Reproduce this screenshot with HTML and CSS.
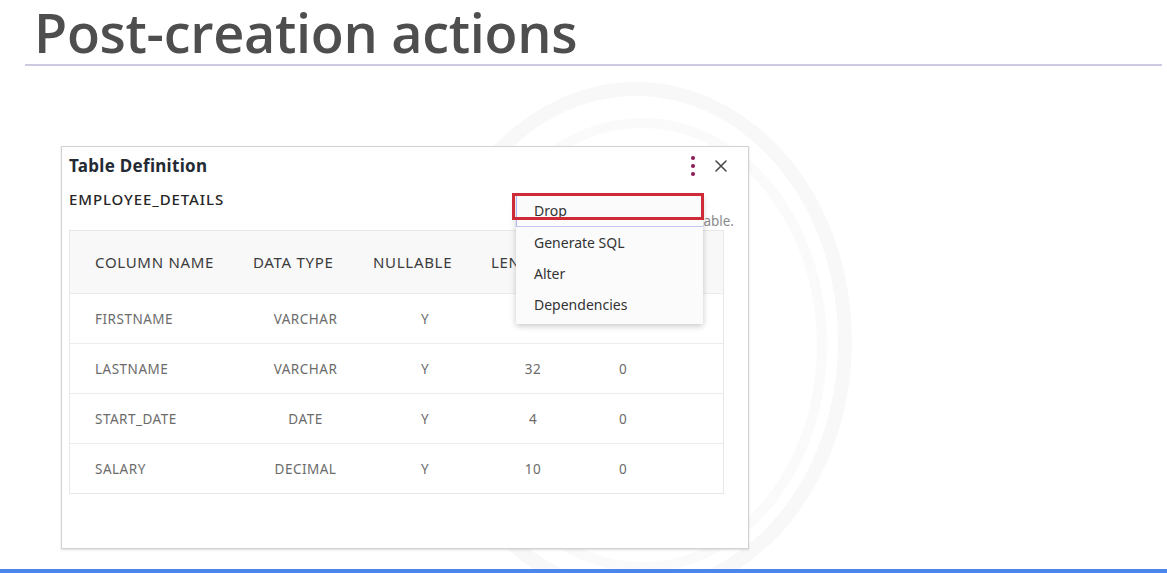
FILE: index.html
```html
<!DOCTYPE html>
<html>
<head>
<meta charset="utf-8">
<link rel="stylesheet" href="styles.css">
</head>
<body>
<svg class="watermark" width="1167" height="573" viewBox="0 0 1167 573">
  <ellipse cx="636" cy="341" rx="209" ry="252" fill="none" stroke="#f8f8f9" stroke-width="14"/>
  <ellipse cx="642" cy="345" rx="180" ry="222" fill="none" stroke="#fafafb" stroke-width="10"/>
</svg>
<header class="top">
  <h1 class="title">Post-creation actions</h1>
  <div class="rule"></div>
</header>
<main class="stage">
  <section class="panel">
    <div class="panel-head">
      <div class="panel-title">Table Definition</div>
      <div class="panel-tools">
        <span class="kebab"><i></i><i></i><i></i></span>
        <svg class="close" width="14" height="14" viewBox="0 0 14 14"><path d="M2 2 L12 12 M12 2 L2 12" stroke="#4a4a4a" stroke-width="1.6" stroke-linecap="round"/></svg>
      </div>
    </div>
    <div class="subtitle">EMPLOYEE_DETAILS</div>
    <div class="note">Choose an action for this table.</div>
    <div class="table">
      <div class="row head">
        <div class="c c1">COLUMN NAME</div>
        <div class="c c2">DATA TYPE</div>
        <div class="c c3">NULLABLE</div>
        <div class="c c4">LENGTH</div>
        <div class="c c5">SCALE</div>
      </div>
      <div class="row">
        <div class="c c1">FIRSTNAME</div><div class="c c2">VARCHAR</div><div class="c c3">Y</div><div class="c c4">32</div><div class="c c5">0</div>
      </div>
      <div class="row">
        <div class="c c1">LASTNAME</div><div class="c c2">VARCHAR</div><div class="c c3">Y</div><div class="c c4">32</div><div class="c c5">0</div>
      </div>
      <div class="row">
        <div class="c c1">START_DATE</div><div class="c c2">DATE</div><div class="c c3">Y</div><div class="c c4">4</div><div class="c c5">0</div>
      </div>
      <div class="row">
        <div class="c c1">SALARY</div><div class="c c2">DECIMAL</div><div class="c c3">Y</div><div class="c c4">10</div><div class="c c5">0</div>
      </div>
    </div>
    <ul class="menu">
      <li class="item focus">Drop</li>
      <li class="item">Generate SQL</li>
      <li class="item">Alter</li>
      <li class="item">Dependencies</li>
    </ul>
    <div class="highlight"></div>
  </section>
</main>
<div class="bottom-bar"></div>
</body>
</html>
```
FILE: styles.css
```css
html, body {
  margin: 0;
  padding: 0;
}
body {
  width: 1167px;
  height: 573px;
  overflow: hidden;
  position: relative;
  background: #ffffff;
  font-family: "Noto Sans", "Open Sans", sans-serif;
  display: flex;
  flex-direction: column;
}
.watermark {
  position: absolute;
  left: 0;
  top: 0;
  z-index: 0;
}
.top {
  position: relative;
  z-index: 1;
}
.title {
  margin: 0;
  padding-left: 34px;
  font-family: "Open Sans", sans-serif;
  font-weight: 600;
  font-size: 54px;
  line-height: 64px;
  color: #4e4e4e;
  letter-spacing: -0.3px;
}
.rule {
  margin-left: 25px;
  width: 1137px;
  height: 2px;
  background: #cdc9e0;
}
.stage {
  position: relative;
  z-index: 1;
  flex: 1;
  padding-left: 61px;
  padding-top: 80px;
}
.panel {
  position: relative;
  border: 1px solid #d2d2d2;
  box-shadow: 0 1px 2px rgba(0,0,0,0.14);
  background: #ffffff;
  padding: 8px 0 0 7px;
  width: 679px;
  height: 393px;
}
.panel-head {
  display: flex;
  align-items: center;
  justify-content: space-between;
  height: 20px;
  padding-right: 20px;
}
.panel-title {
  font-weight: 700;
  font-size: 17px;
  letter-spacing: 0.3px;
  color: #242a33;
}
.panel-tools {
  display: flex;
  align-items: center;
  gap: 19px;
}
.kebab {
  display: flex;
  flex-direction: column;
  gap: 4px;
  padding-top: 2px;
}
.kebab i {
  display: block;
  width: 4px;
  height: 4px;
  border-radius: 50%;
  background: #8a1c54;
}
.close {
  display: block;
  margin-top: 2px;
}
.subtitle {
  margin-top: 14px;
  height: 20px;
  line-height: 20px;
  font-size: 15px;
  font-weight: 500;
  letter-spacing: 0.9px;
  color: #262626;
}
.note {
  margin-top: 3px;
  height: 18px;
  line-height: 18px;
  font-size: 13.5px;
  color: #8a8a8a;
  text-align: right;
  padding-right: 14px;
}
.table {
  margin-top: 0;
  width: 653px;
  border: 1px solid #e7e7e7;
}
.row {
  display: flex;
  align-items: center;
  height: 50px;
  border-top: 1px solid #ececec;
  font-size: 13.5px;
  letter-spacing: 0.5px;
  color: #6b6b6b;
  box-sizing: border-box;
}
.row.head {
  height: 62px;
  border-top: none;
  background: #f8f8f8;
  font-size: 15px;
  letter-spacing: 0.7px;
  color: #3c3c3c;
}
.c {
  white-space: nowrap;
  overflow: hidden;
}
.c1 { width: 144px; padding-left: 25px; }
.c2 { width: 133px; text-align: center; }
.c3 { width: 106px; text-align: center; }
.c4 { width: 110px; text-align: center; }
.c5 { width: 70px; text-align: center; }
.head .c2 { text-align: left; padding-left: 14px; width: 119px; }
.head .c3 { text-align: left; padding-left: 1px; width: 105px; }
.head .c4 { text-align: left; padding-left: 13px; width: 97px; }
.head .c5 { text-align: left; }
.menu {
  position: absolute;
  left: 454px;
  top: 49px;
  width: 187px;
  margin: 0;
  padding: 0 0 4px 0;
  list-style: none;
  background: #fbfbfb;
  box-shadow: 0 2px 6px rgba(0,0,0,0.22);
  z-index: 2;
}
.item {
  height: 31px;
  line-height: 31px;
  padding-left: 18px;
  font-size: 14px;
  color: #333333;
  box-sizing: border-box;
}
.item.focus {
  border-left: 1px solid #aeb4f0;
  border-bottom: 1px solid #c3c6f3;
  padding-left: 17px;
  line-height: 29px;
}
.highlight {
  position: absolute;
  left: 450px;
  top: 46px;
  width: 186px;
  height: 21px;
  border: 3px solid #cf2b37;
  z-index: 3;
}
.bottom-bar {
  position: relative;
  z-index: 1;
  height: 4px;
  background: #4a86ec;
}
```
